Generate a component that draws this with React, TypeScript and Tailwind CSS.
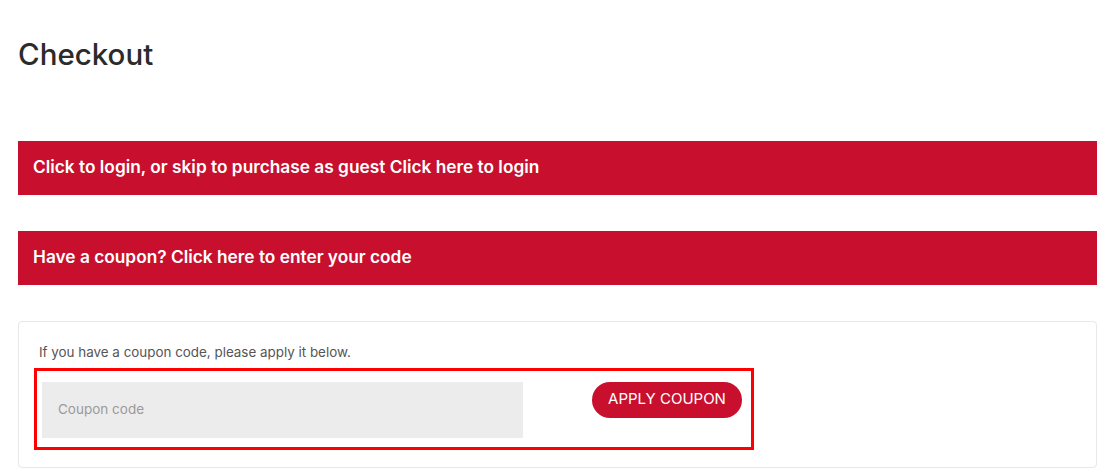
export default function App() {
  return (
    <div
      className="min-h-[471px] bg-white pl-[18px] pr-[9px] pt-[37px] text-[#333]"
      style={{ fontFamily: "Inter, 'Liberation Sans', sans-serif" }}
    >
      <h1 className="text-[29.5px] font-medium leading-[34px] text-[#2b2b2b]">
        Checkout
      </h1>

      {/* notices */}
      <div className="mt-[70px] flex h-[54px] items-center bg-[#c8102e] px-[15px] pb-[3px]">
        <p className="text-[17.3px] font-semibold text-white">
          Click to login, or skip to purchase as guest Click here to login
        </p>
      </div>
      <div className="mt-[36px] flex h-[54px] items-center bg-[#c8102e] px-[15px] pb-[3px]">
        <p className="text-[17.3px] font-semibold text-white">
          Have a coupon? Click here to enter your code
        </p>
      </div>

      {/* coupon form */}
      <div className="mt-[36px] h-[147px] rounded-[4px] border border-[#e8e8e8] px-[15px] pt-[22px]">
        <p className="ml-[5px] text-[13.4px] leading-[16px] text-[#555]">
          If you have a coupon code, please apply it below.
        </p>
        <div className="mt-[8px] flex w-[720px] items-start justify-between border-[3px] border-[#ff0000] pb-[9px] pl-[5px] pr-[9px] pt-[11px]">
          <input
            placeholder="Coupon code"
            className="h-[56px] w-[481px] bg-[#ececec] px-[16px] pb-[3px] text-[13.5px] text-[#333] outline-none placeholder:text-[#9a9a9a]"
          />
          <button className="h-[36px] w-[150px] rounded-full bg-[#c8102e] pb-[1px] text-[15px] text-white">
            APPLY COUPON
          </button>
        </div>
      </div>
    </div>
  );
}
